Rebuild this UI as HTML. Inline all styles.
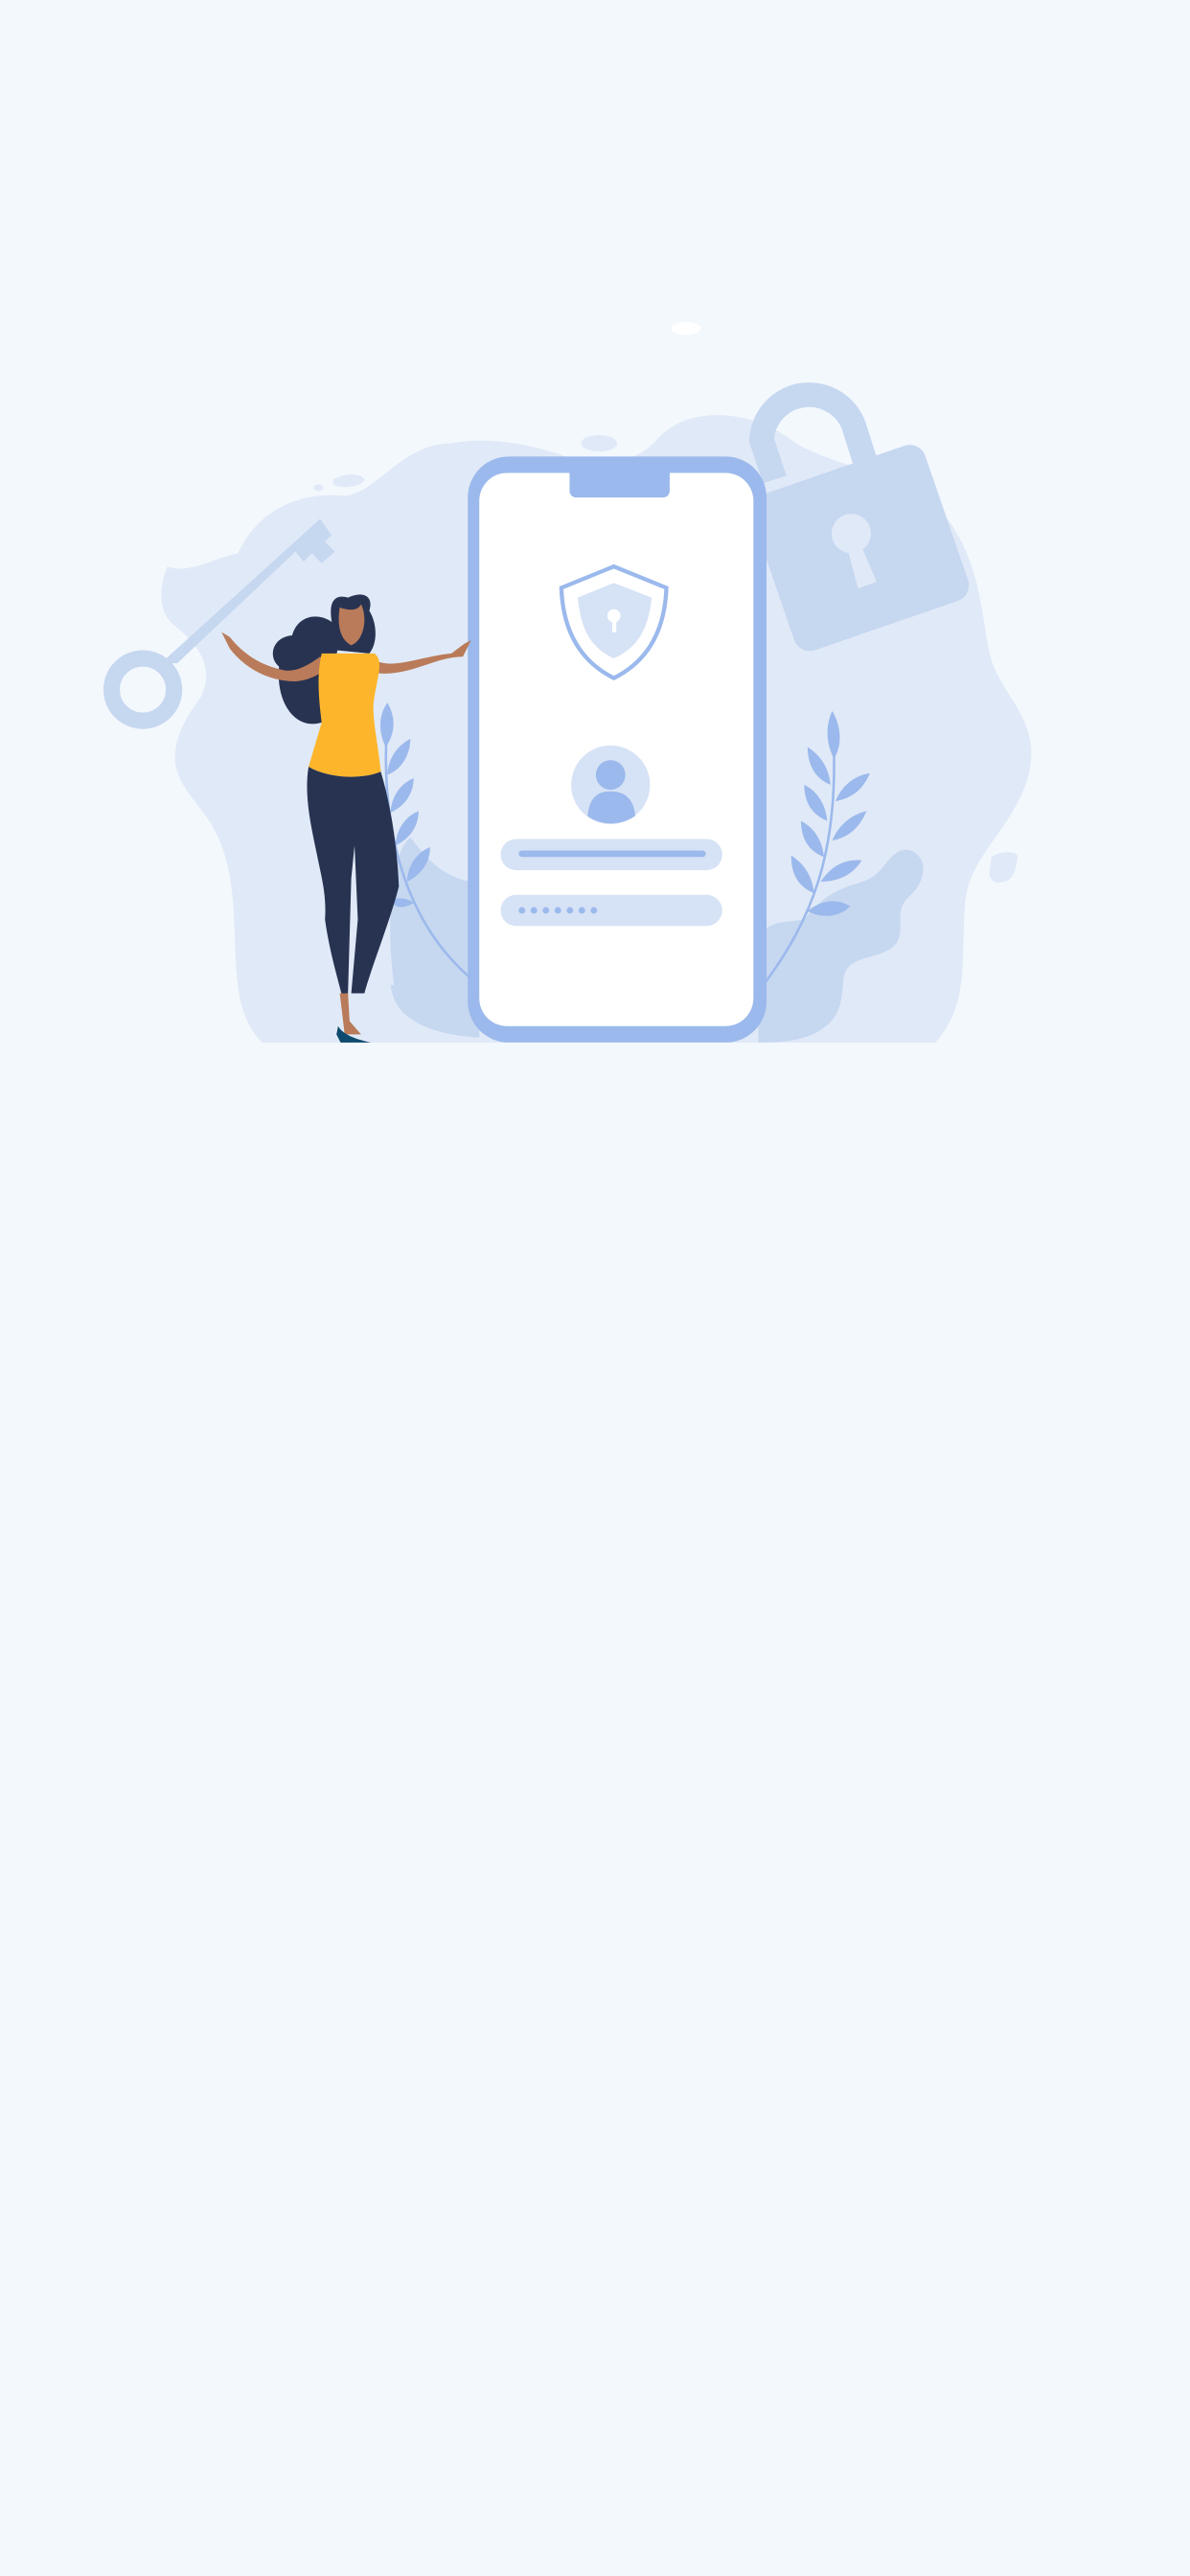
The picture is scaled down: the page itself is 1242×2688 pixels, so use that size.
<!DOCTYPE html>
<html><head><meta charset="utf-8"><style>
html,body{margin:0;padding:0;background:#f3f8fd;}
svg{display:block}
</style></head><body>
<svg width="1242" height="2688" viewBox="0 0 725 1569" xmlns="http://www.w3.org/2000/svg">
<rect width="725" height="1569" fill="#f3f8fd"/>
<defs><clipPath id="c"><rect x="0" y="0" width="725" height="635"/></clipPath></defs>
<g clip-path="url(#c)">
<path d="M165 640 C140 620 145 590 142 550 C138 500 120 495 110 475 C100 455 115 435 122 425 C130 410 125 395 105 380 C95 370 98 355 102 345 C115 350 130 340 145 337 C160 305 190 300 210 302 C230 300 245 270 275 270 C300 265 330 272 350 280 C370 285 390 280 400 268 C420 245 460 250 485 270 C510 285 560 290 580 320 C600 350 598 385 605 405 C615 430 640 445 622 485 C610 510 590 525 588 550 C585 585 592 615 565 640 Z" fill="#e0e9f7"/>
<path d="M240 600 C235 560 238 520 250 510 C262 525 270 535 292 538 L292 632 C260 630 240 620 238 600 Z" fill="#c6d7f0"/>
<path d="M462 570 C470 560 480 562 490 560 C505 540 520 540 530 535 C540 530 543 515 555 518 C565 522 565 535 555 545 C545 553 550 562 548 570 C545 585 520 580 515 592 C512 600 515 610 508 620 C498 633 480 635 462 635 Z" fill="#c6d7f0"/>
<ellipse cx="365" cy="270" rx="11" ry="5" fill="#e0e9f7"/>
<ellipse cx="418" cy="200" rx="9" ry="4" fill="#fff"/>
<path d="M203 292 C210 288 220 288 222 292 C220 297 208 298 203 295 Z" fill="#e0e9f7"/>
<ellipse cx="194" cy="297" rx="3" ry="2" fill="#e0e9f7"/>
<path d="M604 522 C610 518 620 518 620 522 C619 530 617 536 612 537 C605 539 602 535 603 530 Z" fill="#e0e9f7"/>
<path d="M472 292 L464 268 A29 29 0 0 1 521 262 L528 284" fill="none" stroke="#c6d7f0" stroke-width="15"/>
<g transform="rotate(-19 520 335)">
<rect x="468" y="285" width="112" height="100" rx="10" fill="#c6d7f0"/>
<circle cx="522" cy="325" r="12" fill="#e0e9f7"/>
<path d="M517 330 L515 358 L527 358 L525 330 Z" fill="#e0e9f7"/>
</g>
<circle cx="87" cy="420" r="19" fill="none" stroke="#c6d7f0" stroke-width="10"/>
<path d="M98 404 L195 316 L202 326 L198 330 L204 336 L196 343 L190 337 L185 342 L180 336 L108 404 Z" fill="#c6d7f0"/>
<path d="M236 440 C232 490 240 560 292 600" fill="none" stroke="#9bb9ec" stroke-width="1.5"/>
<g fill="#9bb9ec">
<path d="M236 428 C242 438 240 448 235 455 C230 445 231 435 236 428Z"/>
<path d="M250 450 C240 455 236 465 236 472 C246 468 250 458 250 450Z"/>
<path d="M252 474 C242 478 238 488 238 495 C248 490 252 482 252 474Z"/>
<path d="M255 494 C245 498 241 508 241 515 C251 510 255 502 255 494Z"/>
<path d="M262 516 C252 520 248 530 248 537 C258 532 262 524 262 516Z"/>
<path d="M238 548 C244 546 250 548 252 550 C245 554 240 553 238 548Z"/>
</g>
<path d="M508 455 C510 520 495 560 465 600" fill="none" stroke="#9bb9ec" stroke-width="1.5"/>
<g fill="#9bb9ec">
<path d="M507 433 C513 443 513 455 508 462 C503 452 503 442 507 433Z"/>
<path d="M492 455 C500 460 505 468 506 478 C496 474 492 465 492 455Z"/>
<path d="M530 471 C520 472 512 480 509 488 C520 486 526 480 530 471Z"/>
<path d="M490 478 C498 482 503 490 504 500 C494 496 490 488 490 478Z"/>
<path d="M528 494 C518 496 510 504 507 512 C518 510 524 503 528 494Z"/>
<path d="M488 500 C496 504 501 512 502 522 C492 518 488 510 488 500Z"/>
<path d="M525 524 C514 523 506 528 500 537 C512 537 520 532 525 524Z"/>
<path d="M482 521 C490 526 495 534 496 544 C486 540 482 532 482 521Z"/>
<path d="M518 552 C510 547 500 548 492 555 C502 560 512 558 518 552Z"/>
</g>
<rect x="285" y="278" width="182" height="357" rx="25" fill="#9bb9ec"/>
<rect x="292" y="288" width="167" height="337" rx="17" fill="#fff"/>
<rect x="347" y="284" width="61" height="19" rx="4" fill="#9bb9ec"/>
<path d="M374 345 L406 358 C405 385 394 403 374 413 C354 403 343 385 342 358 Z" fill="#fff" stroke="#9bb9ec" stroke-width="2.5"/>
<path d="M374 355 L397 364 C395 385 387 395 374 401 C361 395 354 385 352 364 Z" fill="#d6e2f5"/>
<circle cx="374" cy="375" r="4" fill="#fff"/>
<rect x="373" y="377" width="2.5" height="8" fill="#fff"/>
<circle cx="372" cy="478" r="24" fill="#d6e2f5"/>
<circle cx="372" cy="472" r="9" fill="#9bb9ec"/>
<path d="M358 497 C359 485 365 482 372 482 C379 482 386 485 387 497 C378 503 366 503 358 497Z" fill="#9bb9ec"/>
<rect x="305" y="511" width="135" height="19" rx="9.5" fill="#d6e2f5"/>
<rect x="316" y="518" width="114" height="4" rx="2" fill="#9bb9ec"/>
<rect x="305" y="545" width="135" height="19" rx="9.5" fill="#d6e2f5"/>
<g fill="#9bb9ec"><circle cx="318" cy="554.5" r="2"/><circle cx="325.3" cy="554.5" r="2"/><circle cx="332.6" cy="554.5" r="2"/><circle cx="339.9" cy="554.5" r="2"/><circle cx="347.2" cy="554.5" r="2"/><circle cx="354.5" cy="554.5" r="2"/><circle cx="361.8" cy="554.5" r="2"/></g>
<path d="M208 385 C200 372 182 372 178 387 C166 388 163 400 170 406 C168 428 180 445 196 440 Z" fill="#283352"/>
<path d="M202 378 C200 365 205 362 212 364 C220 360 228 362 225 372 C230 380 230 392 225 398 L205 396 Z" fill="#283352"/>
<path d="M207 370 C213 372 218 372 220 368 C224 376 222 390 214 393 C208 390 205 382 207 370Z" fill="#b97b59"/>
<path d="M135 385 L140 395 C150 408 165 415 180 415 C192 414 198 408 200 405 L195 400 C188 405 180 410 172 408 C158 405 148 398 140 388 Z" fill="#b97b59"/>
<path d="M228 402 C240 408 255 400 275 398 L283 392 L287 390 L282 400 C265 400 250 412 230 410 Z" fill="#b97b59"/>
<path d="M196 398 L228 398 C234 402 230 412 228 425 C226 435 230 450 232 470 C220 475 200 474 188 467 L196 440 C194 425 193 410 196 398Z" fill="#fdb62b"/>
<path d="M188 467 C200 474 220 475 232 470 C238 490 242 515 243 540 C238 560 226 590 222 605 L214 605 L218 560 L216 515 L214 535 L212 605 L208 605 C204 590 200 575 198 560 C199 545 196 535 193 520 C190 505 185 485 188 467Z" fill="#283352"/>
<path d="M207 605 L212 605 L213 622 L220 630 L210 630 Z" fill="#b97b59"/>
<path d="M206 625 C210 632 222 634 230 636 L208 636 L205 630Z" fill="#0e4a6d"/>
</g>
</svg>
</body></html>
